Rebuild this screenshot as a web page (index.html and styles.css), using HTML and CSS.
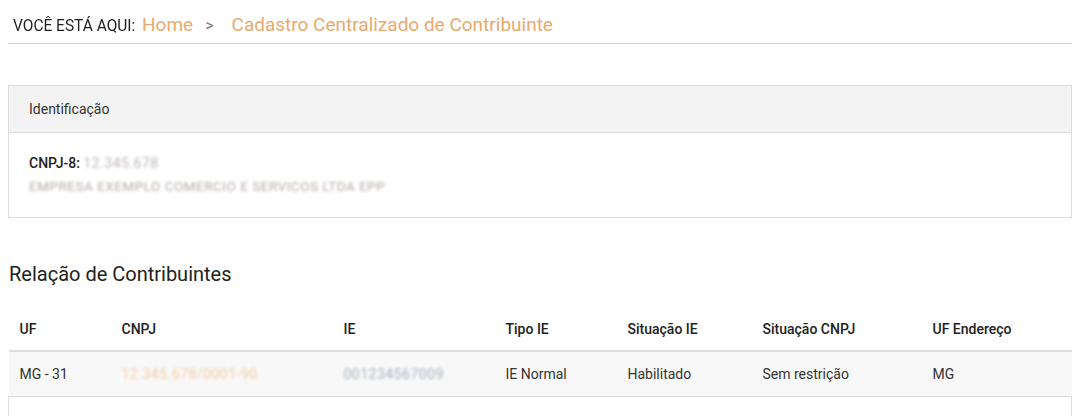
FILE: index.html
```html
<!DOCTYPE html>
<html lang="pt-BR">
<head>
<meta charset="utf-8">
<title>Cadastro Centralizado de Contribuinte</title>
<link rel="stylesheet" href="styles.css">
</head>
<body>
<div class="page">
  <nav class="crumbs">
    <span class="here">VOCÊ ESTÁ AQUI:</span>
    <a class="crumb" href="#">Home</a>
    <span class="sep">&gt;</span>
    <span class="crumb">Cadastro Centralizado de Contribuinte</span>
  </nav>

  <section class="card">
    <div class="card-head">Identificação</div>
    <div class="card-body">
      <div class="line"><strong>CNPJ-8:</strong> <span class="blur blur-a">12.345.678</span></div>
      <div class="line"><span class="blur blur-b">EMPRESA EXEMPLO COMERCIO E SERVICOS LTDA EPP</span></div>
    </div>
  </section>

  <h2 class="title">Relação de Contribuintes</h2>

  <table class="grid">
    <colgroup>
      <col class="c1"><col class="c2"><col class="c3"><col class="c4"><col class="c5"><col class="c6"><col class="c7">
    </colgroup>
    <thead>
      <tr><th>UF</th><th>CNPJ</th><th>IE</th><th>Tipo IE</th><th>Situação IE</th><th>Situação CNPJ</th><th>UF Endereço</th></tr>
    </thead>
    <tbody>
      <tr>
        <td>MG - 31</td>
        <td><span class="blur blur-c">12.345.678/0001-90</span></td>
        <td><span class="blur blur-d">001234567009</span></td>
        <td>IE Normal</td>
        <td>Habilitado</td>
        <td>Sem restrição</td>
        <td>MG</td>
      </tr>
      <tr class="next"><td colspan="7"></td></tr>
    </tbody>
  </table>
</div>
</body>
</html>
```

FILE: styles.css
```css
html, body {
  margin: 0;
  padding: 0;
  background: #fff;
}
body {
  font-family: Roboto, "Liberation Sans", Arial, sans-serif;
  color: #333;
  font-size: 14px;
  overflow: hidden;
}
.page {
  padding: 0 10px 0 8px;
}
.crumbs {
  display: flex;
  align-items: baseline;
  height: 44px;
  box-sizing: border-box;
  padding: 13px 0 0 5px;
  border-bottom: 1px solid #cfcfcf;
}
.here {
  font-size: 17px;
  color: #1e1e1e;
  display: inline-block;
  width: 123px;
  white-space: nowrap;
  transform: scaleX(0.91);
  transform-origin: left center;
}
.crumb {
  font-size: 19px;
  color: #e9aa6b;
  text-decoration: none;
  margin-left: 6px;
}
.sep {
  font-size: 16px;
  color: #777;
  margin: 0 12px 0 12px;
}
.card {
  margin-top: 41px;
  border: 1px solid #ddd;
}
.card-head {
  background: #f3f3f3;
  border-bottom: 1px solid #ddd;
  height: 47px;
  box-sizing: border-box;
  padding: 15px 20px 0;
  color: #333;
}
.card-body {
  padding: 19px 20px 22px;
  line-height: 22px;
  height: 84px;
  box-sizing: border-box;
}
.card-body strong {
  font-weight: 500;
  color: #222;
}
.line {
  height: 23px;
}
.blur {
  filter: blur(1.4px);
  opacity: 0.6;
  letter-spacing: 0.5px;
}
.blur-a { color: #8f8580; }
.blur-b { color: #80726d; font-size: 13.5px; }
.blur-c { color: #f0a050; opacity: 0.5; }
.blur-d { color: #6f7d92; }
.title {
  font-weight: 400;
  font-size: 20px;
  color: #222;
  margin: 42px 0 0 1px;
  line-height: 28px;
}
.grid {
  width: 100%;
  border-collapse: collapse;
  margin-top: 19px;
  table-layout: fixed;
}
.c1 { width: 102px; }
.c2 { width: 222px; }
.c3 { width: 162px; }
.c4 { width: 122px; }
.c5 { width: 135px; }
.c6 { width: 170px; }
.c7 { width: auto; }
.grid th {
  text-align: left;
  font-weight: 500;
  color: #222;
  padding: 0 11px;
  height: 43px;
  border-bottom: 2px solid #ddd;
}
.grid td {
  padding: 0 11px;
  height: 44px;
  background: #f8f8f8;
  color: #333;
  border-bottom: 1px solid #ddd;
  white-space: nowrap;
}
.grid .next td {
  background: #fff;
  border-left: 1px solid #ddd;
  border-right: 1px solid #ddd;
  border-bottom: none;
  height: 20px;
}
```
